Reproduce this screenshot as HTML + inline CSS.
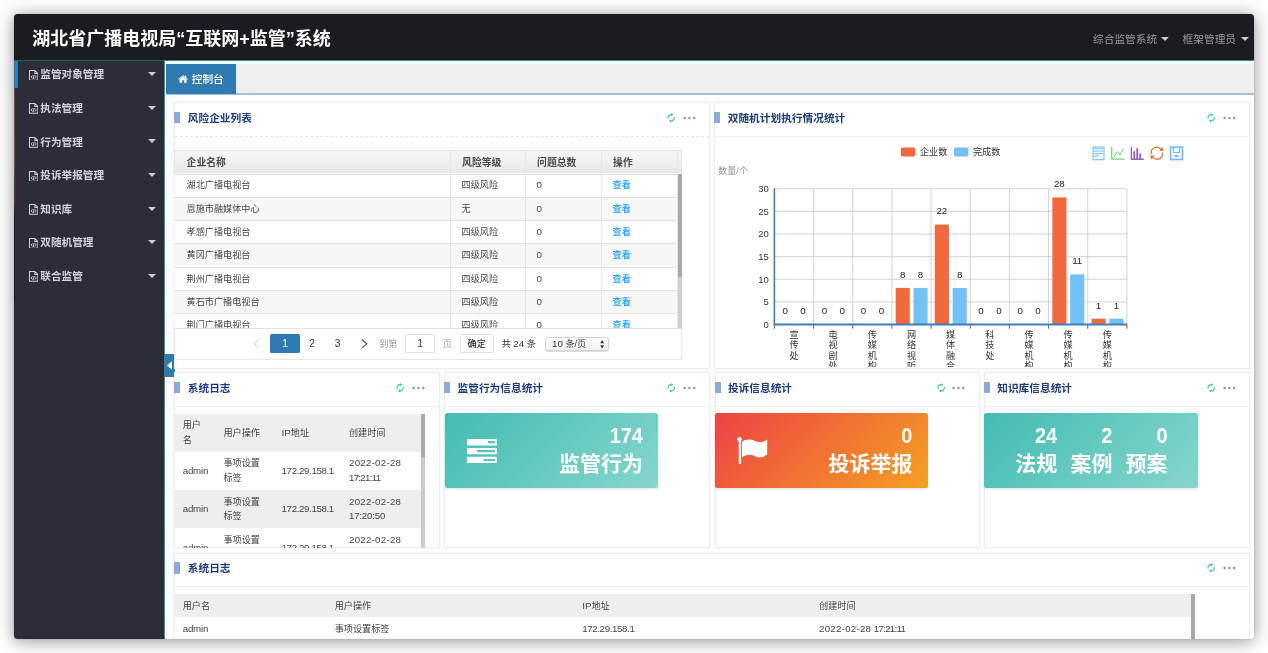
<!DOCTYPE html>
<html lang="zh-CN">
<head>
<meta charset="utf-8">
<title>湖北省广播电视局“互联网+监管”系统</title>
<style>
*{box-sizing:border-box;margin:0;padding:0}
html,body{width:1268px;height:653px;overflow:hidden;background:#fff}
body{font-family:"Liberation Sans","Noto Sans CJK SC",sans-serif;font-size:9.3px;color:#444;position:relative}
#win{position:absolute;left:14px;top:14px;width:1240.4px;height:625.3px;background:#fff;border-radius:3.5px;overflow:hidden;box-shadow:0 1px 18px rgba(0,0,0,.34),0 5px 16px rgba(0,0,0,.10),0 0 2px rgba(0,0,0,.18)}
#pg{position:absolute;left:-14px;top:-14px;width:1268px;height:653px;will-change:transform}
#pg div,#pg span,#pg svg{position:absolute}
#hdr{left:14px;top:14px;width:1241px;height:46.4px;background:#1b1c22}
.ttl{left:32.3px;top:25.6px;font-size:18px;line-height:27px;font-weight:bold;color:#fff;white-space:nowrap}
.nav{top:30.5px;font-size:10.7px;line-height:16px;color:#9a9b9f;white-space:nowrap}
.caret{width:0;height:0;border-left:4.2px solid transparent;border-right:4.2px solid transparent;border-top:4.2px solid #ccc}
#teal{left:14px;top:60.2px;width:1241px;height:1.1px;background:linear-gradient(90deg,#1f625c 0,#1f625c 150px,#2a9182 150px)}
#side{left:14px;top:61.4px;width:150px;height:578px;background:#2b2d39}
#sideline{left:164px;top:61px;width:1.35px;height:578px;background:#2d9c8e}
#act{left:14px;top:61.4px;width:3.8px;height:26.8px;background:#2f7ab0}
.mi{left:40.3px;font-size:10.65px;line-height:16px;color:#d2d3d9;font-weight:bold;white-space:nowrap}
.mico{left:28.9px;width:9.4px;height:10.8px}
#tabbar{left:166.4px;top:63.5px;width:1088px;height:29.8px;background:#efefef}
#tabline{left:166.4px;top:93.3px;width:1088px;height:1.3px;background:#9fc0dc}
#tab{left:166.4px;top:63.7px;width:69.6px;height:30.2px;background:#2f7ab0}
#tab span{left:25.3px;top:6.9px;font-size:10.7px;line-height:16px;white-space:nowrap;color:#fff;font-weight:500}
.panel{background:#fff;border:1px solid #eeeeee;box-shadow:0 0 2.5px rgba(0,0,0,.07)}
.pt{font-size:10.7px;line-height:16px;font-weight:bold;color:#1f3b7b;white-space:nowrap}
.pbar{width:6.1px;height:11.6px;background:#8fa8da}
.pline{height:0;border-top:1px dashed #e6e6e6}
.dot{width:2.8px;height:2.8px;border-radius:50%;background:#a2a2a2}
.t{white-space:nowrap;line-height:14px;font-size:9.15px;color:#444}
.th{font-weight:bold;font-size:9.8px;color:#4a4a4a}
.lk{color:#1e9fff;font-weight:500}
.vl{width:1px;background:#e6e6e6}
.hl{height:1.2px;background:#e1e1e1}
.card{border-radius:2.5px;box-shadow:0 1px 3px rgba(0,0,0,.12)}
.big{font-size:20px;line-height:28px;font-weight:bold;color:#fff;white-space:nowrap;text-align:right;transform:scaleY(1.06);transform-origin:50% 72%}
.bigc{font-size:21px;line-height:28px;font-weight:bold;color:#fff;white-space:nowrap;text-align:right}
#pg span.n{position:static;font-size:9.8px}
svg text{font-family:"Liberation Sans","Noto Sans CJK SC",sans-serif}
</style>
</head>
<body>
<div id="win"><div id="pg">
<div id="hdr"></div>
<div class="ttl">湖北省广播电视局“互联网+监管”系统</div>
<div class="nav" style="left:1093px">综合监管系统</div>
<div class="caret" style="left:1161.4px;top:36.6px"></div>
<div class="nav" style="left:1182.6px">框架管理员</div>
<div class="caret" style="left:1240.7px;top:36.6px"></div>
<div id="teal"></div>
<div id="side"></div><div id="sideline"></div><div id="act"></div>
<div style="left:14px;top:88.2px;width:1px;height:214px;background:linear-gradient(rgba(190,135,55,.45) 0%,rgba(200,130,50,.5) 36%,rgba(200,55,80,.6) 42%,rgba(200,50,80,.55) 53%,#1d1d29 60%,#1d1d29 100%)"></div>
<svg class="mico" style="top:69.7px" viewBox="0 0 9.4 10.8"><path d="M0.5 0.5H5.9L8.9 3.5V10.3H0.5Z M5.9 0.5V3.5H8.9" fill="none" stroke="#d2d3d9" stroke-width="1.05" stroke-linejoin="round"/><path d="M3.5 5.3L2.2 6.9L3.5 8.5M5.9 5.3L7.2 6.9L5.9 8.5M5.1 4.9L4.3 8.9" fill="none" stroke="#d2d3d9" stroke-width="0.95"/></svg>
<div class="mi" style="top:66.3px">监管对象管理</div>
<div class="caret" style="left:147.9px;top:72.2px"></div>
<svg class="mico" style="top:103.3px" viewBox="0 0 9.4 10.8"><path d="M0.5 0.5H5.9L8.9 3.5V10.3H0.5Z M5.9 0.5V3.5H8.9" fill="none" stroke="#d2d3d9" stroke-width="1.05" stroke-linejoin="round"/><path d="M3.5 5.3L2.2 6.9L3.5 8.5M5.9 5.3L7.2 6.9L5.9 8.5M5.1 4.9L4.3 8.9" fill="none" stroke="#d2d3d9" stroke-width="0.95"/></svg>
<div class="mi" style="top:99.9px">执法管理</div>
<div class="caret" style="left:147.9px;top:105.8px"></div>
<svg class="mico" style="top:136.9px" viewBox="0 0 9.4 10.8"><path d="M0.5 0.5H5.9L8.9 3.5V10.3H0.5Z M5.9 0.5V3.5H8.9" fill="none" stroke="#d2d3d9" stroke-width="1.05" stroke-linejoin="round"/><path d="M3.5 5.3L2.2 6.9L3.5 8.5M5.9 5.3L7.2 6.9L5.9 8.5M5.1 4.9L4.3 8.9" fill="none" stroke="#d2d3d9" stroke-width="0.95"/></svg>
<div class="mi" style="top:133.5px">行为管理</div>
<div class="caret" style="left:147.9px;top:139.4px"></div>
<svg class="mico" style="top:170.5px" viewBox="0 0 9.4 10.8"><path d="M0.5 0.5H5.9L8.9 3.5V10.3H0.5Z M5.9 0.5V3.5H8.9" fill="none" stroke="#d2d3d9" stroke-width="1.05" stroke-linejoin="round"/><path d="M3.5 5.3L2.2 6.9L3.5 8.5M5.9 5.3L7.2 6.9L5.9 8.5M5.1 4.9L4.3 8.9" fill="none" stroke="#d2d3d9" stroke-width="0.95"/></svg>
<div class="mi" style="top:167.1px">投诉举报管理</div>
<div class="caret" style="left:147.9px;top:173px"></div>
<svg class="mico" style="top:204.1px" viewBox="0 0 9.4 10.8"><path d="M0.5 0.5H5.9L8.9 3.5V10.3H0.5Z M5.9 0.5V3.5H8.9" fill="none" stroke="#d2d3d9" stroke-width="1.05" stroke-linejoin="round"/><path d="M3.5 5.3L2.2 6.9L3.5 8.5M5.9 5.3L7.2 6.9L5.9 8.5M5.1 4.9L4.3 8.9" fill="none" stroke="#d2d3d9" stroke-width="0.95"/></svg>
<div class="mi" style="top:200.7px">知识库</div>
<div class="caret" style="left:147.9px;top:206.6px"></div>
<svg class="mico" style="top:237.7px" viewBox="0 0 9.4 10.8"><path d="M0.5 0.5H5.9L8.9 3.5V10.3H0.5Z M5.9 0.5V3.5H8.9" fill="none" stroke="#d2d3d9" stroke-width="1.05" stroke-linejoin="round"/><path d="M3.5 5.3L2.2 6.9L3.5 8.5M5.9 5.3L7.2 6.9L5.9 8.5M5.1 4.9L4.3 8.9" fill="none" stroke="#d2d3d9" stroke-width="0.95"/></svg>
<div class="mi" style="top:234.3px">双随机管理</div>
<div class="caret" style="left:147.9px;top:240.2px"></div>
<svg class="mico" style="top:271.3px" viewBox="0 0 9.4 10.8"><path d="M0.5 0.5H5.9L8.9 3.5V10.3H0.5Z M5.9 0.5V3.5H8.9" fill="none" stroke="#d2d3d9" stroke-width="1.05" stroke-linejoin="round"/><path d="M3.5 5.3L2.2 6.9L3.5 8.5M5.9 5.3L7.2 6.9L5.9 8.5M5.1 4.9L4.3 8.9" fill="none" stroke="#d2d3d9" stroke-width="0.95"/></svg>
<div class="mi" style="top:267.9px">联合监管</div>
<div class="caret" style="left:147.9px;top:273.8px"></div>
<div id="tabbar"></div><div id="tabline"></div>
<div id="tab"><svg style="left:11.6px;top:11.4px;width:10.2px;height:8px" viewBox="0 0 9.6 7.6"><path d="M4.8 1.5L1.4 4.3V7.3H3.9V5.1H5.7V7.3H8.2V4.3Z" fill="#fff"/><path d="M0.3 3.9L4.8 0.2L6.6 1.7V0.7H7.8V2.7L9.3 3.9L8.8 4.5L4.8 1.2L0.8 4.5Z" fill="#fff"/></svg><span>控制台</span></div>
<div style="left:164.1px;top:354.2px;width:10.8px;height:22.5px;background:#2f7ab0"><svg style="left:2.7px;top:6.6px;width:5.4px;height:9.2px" viewBox="0 0 5.4 9.2"><path d="M5.4 0V9.2L0 4.6Z" fill="#fff"/></svg></div>
<div class="panel" style="left:174.4px;top:102.2px;width:535.6px;height:266.5px;"></div>
<div class="pbar" style="left:174.4px;top:111.7px;width:6.1px;height:11.6px;"></div>
<div class="pt" style="left:187.8px;top:109.6px;">风险企业列表</div>
<div class="pline" style="left:175.4px;top:135.6px;width:533.6px"></div>
<svg style="left:666.8px;top:112.7px;width:8.4px;height:9.6px" viewBox="0 0 8.4 9.6"><g fill="none" stroke="#34c98a" stroke-width="1.1"><path d="M1.1 5.6A3.2 3.2 0 0 1 4.6 1.7"/><path d="M7.3 4A3.2 3.2 0 0 1 3.8 7.9"/></g><path d="M4.2 0L6.3 1.7L4.2 3.3Z M4.2 9.6L2.1 7.9L4.2 6.3Z" fill="#34c98a"/></svg>
<svg style="left:682.5px;top:115.5px;width:13px;height:4px" viewBox="0 0 13 4"><circle cx="1.7" cy="2" r="1.35" fill="#9c9c9c"/><circle cx="6.45" cy="2" r="1.35" fill="#9c9c9c"/><circle cx="11.2" cy="2" r="1.35" fill="#9c9c9c"/></svg>
<div style="left:174.4px;top:149.9px;width:507.9px;height:210.5px;border:1px solid #e6e6e6;background:#fff"></div>
<div style="left:175.4px;top:150.9px;width:505.9px;height:22.6px;background:linear-gradient(#f6f6f6,#e9e9e9)"></div>
<div style="left:174.4px;top:174px;width:504px;height:154px;overflow:hidden"><div style="left:0px;top:0px;width:503px;height:23.3px;background:#fff"></div><div style="left:0px;top:23.3px;width:503px;height:23.3px;background:#f7f7f7"></div><div style="left:0px;top:46.6px;width:503px;height:23.3px;background:#fff"></div><div style="left:0px;top:69.9px;width:503px;height:23.3px;background:#f7f7f7"></div><div style="left:0px;top:93.2px;width:503px;height:23.3px;background:#fff"></div><div style="left:0px;top:116.5px;width:503px;height:23.3px;background:#f7f7f7"></div><div style="left:0px;top:139.8px;width:503px;height:23.3px;background:#fff"></div><div class="hl" style="left:0px;top:22.7px;width:503px;height:1px;"></div><div class="t" style="left:12.2px;top:4.35px;">湖北广播电视台</div><div class="t" style="left:287.2px;top:4.35px;">四级风险</div><div class="t" style="left:362.2px;top:4.35px;font-size:9.8px">0</div><div class="t lk" style="left:438.2px;top:4.35px;">查看</div><div class="hl" style="left:0px;top:46px;width:503px;height:1px;"></div><div class="t" style="left:12.2px;top:27.65px;">恩施市融媒体中心</div><div class="t" style="left:287.2px;top:27.65px;">无</div><div class="t" style="left:362.2px;top:27.65px;font-size:9.8px">0</div><div class="t lk" style="left:438.2px;top:27.65px;">查看</div><div class="hl" style="left:0px;top:69.3px;width:503px;height:1px;"></div><div class="t" style="left:12.2px;top:50.95px;">孝感广播电视台</div><div class="t" style="left:287.2px;top:50.95px;">四级风险</div><div class="t" style="left:362.2px;top:50.95px;font-size:9.8px">0</div><div class="t lk" style="left:438.2px;top:50.95px;">查看</div><div class="hl" style="left:0px;top:92.6px;width:503px;height:1px;"></div><div class="t" style="left:12.2px;top:74.25px;">黄冈广播电视台</div><div class="t" style="left:287.2px;top:74.25px;">四级风险</div><div class="t" style="left:362.2px;top:74.25px;font-size:9.8px">0</div><div class="t lk" style="left:438.2px;top:74.25px;">查看</div><div class="hl" style="left:0px;top:115.9px;width:503px;height:1px;"></div><div class="t" style="left:12.2px;top:97.55px;">荆州广播电视台</div><div class="t" style="left:287.2px;top:97.55px;">四级风险</div><div class="t" style="left:362.2px;top:97.55px;font-size:9.8px">0</div><div class="t lk" style="left:438.2px;top:97.55px;">查看</div><div class="hl" style="left:0px;top:139.2px;width:503px;height:1px;"></div><div class="t" style="left:12.2px;top:120.85px;">黄石市广播电视台</div><div class="t" style="left:287.2px;top:120.85px;">四级风险</div><div class="t" style="left:362.2px;top:120.85px;font-size:9.8px">0</div><div class="t lk" style="left:438.2px;top:120.85px;">查看</div><div class="hl" style="left:0px;top:162.5px;width:503px;height:1px;"></div><div class="t" style="left:12.2px;top:144.15px;">荆门广播电视台</div><div class="t" style="left:287.2px;top:144.15px;">四级风险</div><div class="t" style="left:362.2px;top:144.15px;font-size:9.8px">0</div><div class="t lk" style="left:438.2px;top:144.15px;">查看</div></div>
<div class="hl" style="left:174.4px;top:173.5px;width:507.9px;height:1px;"></div>
<div class="t th" style="left:186.6px;top:155.6px;">企业名称</div>
<div class="t th" style="left:462.1px;top:155.6px;">风险等级</div>
<div class="t th" style="left:537.1px;top:155.6px;">问题总数</div>
<div class="t th" style="left:613.1px;top:155.6px;">操作</div>
<div class="vl" style="left:450px;top:149.9px;width:1px;height:178.1px;"></div>
<div class="vl" style="left:525px;top:149.9px;width:1px;height:178.1px;"></div>
<div class="vl" style="left:601px;top:149.9px;width:1px;height:178.1px;"></div>
<div class="vl" style="left:677.2px;top:149.9px;width:1px;height:178.1px;"></div>
<div style="left:677.7px;top:174.1px;width:4.5px;height:153.9px;background:#cfcfcf"></div>
<div style="left:677.7px;top:174.1px;width:4.5px;height:102.6px;background:#a9a9a9"></div>
<div class="hl" style="left:174.4px;top:327.6px;width:507.9px;height:1px;"></div>
<svg style="left:253px;top:339.4px;width:6.4px;height:9.4px" viewBox="0 0 6.4 9.4"><path d="M5.6 0.5L1 4.7L5.6 8.9" fill="none" stroke="#cfcfcf" stroke-width="1"/></svg>
<div style="left:270.3px;top:334.2px;width:29.6px;height:18.9px;background:#2f7ab0;border-radius:1.5px"></div>
<div class="t" style="left:270.3px;top:336.8px;width:29.6px;text-align:center;color:#fff;font-size:10.3px">1</div>
<div class="t" style="left:302.2px;top:336.8px;width:20px;text-align:center;color:#333;font-size:10.3px">2</div>
<div class="t" style="left:327.5px;top:336.8px;width:20px;text-align:center;color:#333;font-size:10.3px">3</div>
<svg style="left:361.4px;top:339.2px;width:6.8px;height:9.6px" viewBox="0 0 6.8 9.6"><path d="M0.8 0.5L5.8 4.8L0.8 9.1" fill="none" stroke="#444" stroke-width="1.05"/></svg>
<div class="t" style="left:379.2px;top:336.8px;color:#999">到第</div>
<div style="left:405.3px;top:334.2px;width:29.6px;height:18.9px;border:1px solid #e2e2e2;border-radius:1.5px;background:#fff"></div>
<div class="t" style="left:405.3px;top:336.8px;width:29.6px;text-align:center;color:#333;font-size:10.3px">1</div>
<div class="t" style="left:442.8px;top:336.8px;color:#999">页</div>
<div style="left:459.8px;top:334.2px;width:33.9px;height:18.9px;border:1px solid #e2e2e2;border-radius:1.5px;background:#fff"></div>
<div class="t" style="left:459.8px;top:336.8px;width:33.9px;text-align:center;color:#333;font-weight:500">确定</div>
<div class="t" style="left:501.7px;top:336.8px;color:#333">共 <span class="n">24</span> 条</div>
<div style="left:544.9px;top:336.6px;width:63.8px;height:14.3px;border:1px solid #d4d4d4;border-radius:3px;background:linear-gradient(#fdfdfd,#f0f0f0);box-shadow:0 0.5px 1px rgba(0,0,0,.15)"></div>
<div class="t" style="left:552px;top:336.8px;color:#333"><span class="n">10</span> 条/页</div>
<svg style="left:599.6px;top:339.6px;width:4.4px;height:8.4px" viewBox="0 0 4.4 8.4"><path d="M2.2 0L4.2 3.2H0.2Z M2.2 8.4L4.2 5.2H0.2Z" fill="#333"/></svg>
<div class="panel" style="left:714.3px;top:102.2px;width:535.7px;height:266.5px;"></div>
<div class="pbar" style="left:714.3px;top:111.7px;width:6.1px;height:11.6px;"></div>
<div class="pt" style="left:727.7px;top:109.6px;">双随机计划执行情况统计</div>
<div class="pline" style="left:715.3px;top:135.6px;width:533.7px;border-top:1px solid #efefef"></div>
<svg style="left:1206.8px;top:112.7px;width:8.4px;height:9.6px" viewBox="0 0 8.4 9.6"><g fill="none" stroke="#34c98a" stroke-width="1.1"><path d="M1.1 5.6A3.2 3.2 0 0 1 4.6 1.7"/><path d="M7.3 4A3.2 3.2 0 0 1 3.8 7.9"/></g><path d="M4.2 0L6.3 1.7L4.2 3.3Z M4.2 9.6L2.1 7.9L4.2 6.3Z" fill="#34c98a"/></svg>
<svg style="left:1222.5px;top:115.5px;width:13px;height:4px" viewBox="0 0 13 4"><circle cx="1.7" cy="2" r="1.35" fill="#9c9c9c"/><circle cx="6.45" cy="2" r="1.35" fill="#9c9c9c"/><circle cx="11.2" cy="2" r="1.35" fill="#9c9c9c"/></svg>
<svg style="left:715.5px;top:136.5px;width:533.5px;height:230.6px;overflow:hidden" viewBox="715.5 136.5 533.5 230.6"><path d="M773.9 188.3H1126.43M773.9 210.92H1126.43M773.9 233.53H1126.43M773.9 256.15H1126.43M773.9 278.77H1126.43M773.9 301.38H1126.43M813.07 188.3V324M852.24 188.3V324M891.41 188.3V324M930.58 188.3V324M969.75 188.3V324M1008.92 188.3V324M1048.09 188.3V324M1087.26 188.3V324M1126.43 188.3V324" stroke="#c9c9c9" stroke-width="0.8" fill="none"/><path d="M773.9 324.6V328.2M813.07 324.6V328.2M852.24 324.6V328.2M891.41 324.6V328.2M930.58 324.6V328.2M969.75 324.6V328.2M1008.92 324.6V328.2M1048.09 324.6V328.2M1087.26 324.6V328.2M1126.43 324.6V328.2" stroke="#333" stroke-width="0.8" fill="none"/><text x="784.7" y="313.3" font-size="9.8" fill="#222" text-anchor="middle">0</text><text x="802.55" y="313.3" font-size="9.8" fill="#222" text-anchor="middle">0</text><text x="823.87" y="313.3" font-size="9.8" fill="#222" text-anchor="middle">0</text><text x="841.72" y="313.3" font-size="9.8" fill="#222" text-anchor="middle">0</text><text x="863.04" y="313.3" font-size="9.8" fill="#222" text-anchor="middle">0</text><text x="880.89" y="313.3" font-size="9.8" fill="#222" text-anchor="middle">0</text><rect x="895.16" y="287.41" width="14.1" height="36.59" fill="#f0693f"/><text x="902.21" y="277.11" font-size="9.8" fill="#222" text-anchor="middle">8</text><rect x="913.01" y="287.41" width="14.1" height="36.59" fill="#74c1f8"/><text x="920.06" y="277.11" font-size="9.8" fill="#222" text-anchor="middle">8</text><rect x="934.33" y="224.09" width="14.1" height="99.91" fill="#f0693f"/><text x="941.38" y="213.79" font-size="9.8" fill="#222" text-anchor="middle">22</text><rect x="952.18" y="287.41" width="14.1" height="36.59" fill="#74c1f8"/><text x="959.23" y="277.11" font-size="9.8" fill="#222" text-anchor="middle">8</text><text x="980.55" y="313.3" font-size="9.8" fill="#222" text-anchor="middle">0</text><text x="998.4" y="313.3" font-size="9.8" fill="#222" text-anchor="middle">0</text><text x="1019.72" y="313.3" font-size="9.8" fill="#222" text-anchor="middle">0</text><text x="1037.57" y="313.3" font-size="9.8" fill="#222" text-anchor="middle">0</text><rect x="1051.84" y="196.95" width="14.1" height="127.05" fill="#f0693f"/><text x="1058.89" y="186.65" font-size="9.8" fill="#222" text-anchor="middle">28</text><rect x="1069.69" y="273.84" width="14.1" height="50.16" fill="#74c1f8"/><text x="1076.74" y="263.54" font-size="9.8" fill="#222" text-anchor="middle">11</text><rect x="1091.01" y="318.18" width="14.1" height="5.82" fill="#f0693f"/><text x="1098.06" y="308.28" font-size="9.8" fill="#222" text-anchor="middle">1</text><rect x="1108.86" y="318.18" width="14.1" height="5.82" fill="#74c1f8"/><text x="1115.91" y="308.28" font-size="9.8" fill="#222" text-anchor="middle">1</text><path d="M773.9 187.9V324.9" stroke="#3f7ebc" stroke-width="1.6" fill="none"/><path d="M773.15 324H1126.83" stroke="#3f7ebc" stroke-width="1.8" fill="none"/><text x="768.4" y="191.6" font-size="9.5" fill="#333" text-anchor="end">30</text><text x="768.4" y="214.22" font-size="9.5" fill="#333" text-anchor="end">25</text><text x="768.4" y="236.83" font-size="9.5" fill="#333" text-anchor="end">20</text><text x="768.4" y="259.45" font-size="9.5" fill="#333" text-anchor="end">15</text><text x="768.4" y="282.07" font-size="9.5" fill="#333" text-anchor="end">10</text><text x="768.4" y="304.68" font-size="9.5" fill="#333" text-anchor="end">5</text><text x="768.4" y="327.3" font-size="9.5" fill="#333" text-anchor="end">0</text><text x="717.6" y="173.5" font-size="9.15" fill="#999">数量/个</text><text x="793.49" y="337.5" font-size="9.15" fill="#333" text-anchor="middle">宣</text><text x="793.49" y="348" font-size="9.15" fill="#333" text-anchor="middle">传</text><text x="793.49" y="358.5" font-size="9.15" fill="#333" text-anchor="middle">处</text><text x="832.65" y="337.5" font-size="9.15" fill="#333" text-anchor="middle">电</text><text x="832.65" y="348" font-size="9.15" fill="#333" text-anchor="middle">视</text><text x="832.65" y="358.5" font-size="9.15" fill="#333" text-anchor="middle">剧</text><text x="832.65" y="369" font-size="9.15" fill="#333" text-anchor="middle">处</text><text x="871.83" y="337.5" font-size="9.15" fill="#333" text-anchor="middle">传</text><text x="871.83" y="348" font-size="9.15" fill="#333" text-anchor="middle">媒</text><text x="871.83" y="358.5" font-size="9.15" fill="#333" text-anchor="middle">机</text><text x="871.83" y="369" font-size="9.15" fill="#333" text-anchor="middle">构</text><text x="911" y="337.5" font-size="9.15" fill="#333" text-anchor="middle">网</text><text x="911" y="348" font-size="9.15" fill="#333" text-anchor="middle">络</text><text x="911" y="358.5" font-size="9.15" fill="#333" text-anchor="middle">视</text><text x="911" y="369" font-size="9.15" fill="#333" text-anchor="middle">听</text><text x="911" y="379.5" font-size="9.15" fill="#333" text-anchor="middle">节</text><text x="950.16" y="337.5" font-size="9.15" fill="#333" text-anchor="middle">媒</text><text x="950.16" y="348" font-size="9.15" fill="#333" text-anchor="middle">体</text><text x="950.16" y="358.5" font-size="9.15" fill="#333" text-anchor="middle">融</text><text x="950.16" y="369" font-size="9.15" fill="#333" text-anchor="middle">合</text><text x="950.16" y="379.5" font-size="9.15" fill="#333" text-anchor="middle">发</text><text x="989.34" y="337.5" font-size="9.15" fill="#333" text-anchor="middle">科</text><text x="989.34" y="348" font-size="9.15" fill="#333" text-anchor="middle">技</text><text x="989.34" y="358.5" font-size="9.15" fill="#333" text-anchor="middle">处</text><text x="1028.5" y="337.5" font-size="9.15" fill="#333" text-anchor="middle">传</text><text x="1028.5" y="348" font-size="9.15" fill="#333" text-anchor="middle">媒</text><text x="1028.5" y="358.5" font-size="9.15" fill="#333" text-anchor="middle">机</text><text x="1028.5" y="369" font-size="9.15" fill="#333" text-anchor="middle">构</text><text x="1067.67" y="337.5" font-size="9.15" fill="#333" text-anchor="middle">传</text><text x="1067.67" y="348" font-size="9.15" fill="#333" text-anchor="middle">媒</text><text x="1067.67" y="358.5" font-size="9.15" fill="#333" text-anchor="middle">机</text><text x="1067.67" y="369" font-size="9.15" fill="#333" text-anchor="middle">构</text><text x="1106.85" y="337.5" font-size="9.15" fill="#333" text-anchor="middle">传</text><text x="1106.85" y="348" font-size="9.15" fill="#333" text-anchor="middle">媒</text><text x="1106.85" y="358.5" font-size="9.15" fill="#333" text-anchor="middle">机</text><text x="1106.85" y="369" font-size="9.15" fill="#333" text-anchor="middle">构</text><rect x="900.4" y="146.9" width="14.6" height="9.1" rx="2" fill="#f0693f"/><text x="919.4" y="154.9" font-size="9.15" fill="#333">企业数</text><rect x="953.4" y="146.9" width="14.6" height="9.1" rx="2" fill="#74c1f8"/><text x="972.4" y="154.9" font-size="9.15" fill="#333">完成数</text><g fill="none" stroke-width="0.85"><g stroke="#1e90ff" opacity=".62"><rect x="1092.6" y="146.5" width="10.9" height="12.7" stroke-width="1.1"/><path d="M1093.6 148.2H1102.6M1093.6 150.6H1102.6M1093.6 153H1102.6M1093.6 155.5H1098.4" stroke-width="1"/></g><g stroke="#22bb22" opacity=".8"><path d="M1111.3 146.3V158.6H1124" stroke-width="1"/><path d="M1113.1 156.9L1116.9 151.2L1119.4 154.6L1123.1 147.9"/></g><g stroke="#4b0082" opacity=".6"><path d="M1130.9 146.3V158.7H1143.4" stroke-width="1.4"/><path d="M1133.75 158.7V150.8M1136.75 158.7V147.8M1139.75 158.7V152.9" stroke-width="1.9"/></g><g stroke="#d2691e" stroke-width="1.2" opacity=".9"><path d="M1150.9 153.6A5.5 5.5 0 0 1 1160.6 148.9"/><path d="M1161.9 151.8A5.5 5.5 0 0 1 1152.2 156.5"/><path d="M1158.9 150.7L1163.4 150.1L1161.6 146.2Z M1153.9 154.7L1149.4 155.3L1151.2 159.2Z" fill="#d2691e" stroke="none"/></g><g stroke="#1e90ff" opacity=".62"><rect x="1170.1" y="146.7" width="11.9" height="12.3" stroke-width="1.7"/><path d="M1172.9 146.7V152H1179.2V146.7" stroke-width="1.1"/><rect x="1174.1" y="154.5" width="4" height="2.1" fill="#1e90ff" stroke="none"/></g></g></svg>
<div class="panel" style="left:174.4px;top:372.4px;width:265.2px;height:175.5px;"></div>
<div class="pbar" style="left:174.4px;top:381.9px;width:6.1px;height:11.6px;"></div>
<div class="pt" style="left:187.8px;top:379.8px;">系统日志</div>
<div class="pline" style="left:175.4px;top:405.7px;width:263.2px;border-top:1px solid #efefef"></div>
<svg style="left:396.4px;top:382.9px;width:8.4px;height:9.6px" viewBox="0 0 8.4 9.6"><g fill="none" stroke="#34c98a" stroke-width="1.1"><path d="M1.1 5.6A3.2 3.2 0 0 1 4.6 1.7"/><path d="M7.3 4A3.2 3.2 0 0 1 3.8 7.9"/></g><path d="M4.2 0L6.3 1.7L4.2 3.3Z M4.2 9.6L2.1 7.9L4.2 6.3Z" fill="#34c98a"/></svg>
<svg style="left:412.1px;top:385.7px;width:13px;height:4px" viewBox="0 0 13 4"><circle cx="1.7" cy="2" r="1.35" fill="#9c9c9c"/><circle cx="6.45" cy="2" r="1.35" fill="#9c9c9c"/><circle cx="11.2" cy="2" r="1.35" fill="#9c9c9c"/></svg>
<div style="left:175.4px;top:413.5px;width:250px;height:134px;overflow:hidden"><div style="left:0px;top:0px;width:245.8px;height:38.3px;background:#eeeeee"></div><div style="left:0px;top:76.6px;width:245.8px;height:38.4px;background:#eeeeee"></div><div style="left:245.7px;top:0px;width:4.3px;height:134px;background:#cbcbcb"></div><div style="left:245.7px;top:0px;width:4.3px;height:43.2px;background:#a9a9a9"></div><div class="t" style="left:7.3px;top:4.8px;">用户</div><div class="t" style="left:7.3px;top:19.4px;">名</div><div class="t" style="left:48px;top:12.2px;">用户操作</div><div class="t" style="left:106.2px;top:12.2px;"><span class="n">IP</span>地址</div><div class="t" style="left:173.6px;top:12.2px;">创建时间</div><div class="t" style="left:7.3px;top:50.2px;font-size:9.7px;letter-spacing:-0.18px">admin</div><div class="t" style="left:48px;top:42.9px;">事项设置</div><div class="t" style="left:48px;top:57.5px;">标签</div><div class="t" style="left:106.2px;top:50.2px;font-size:9.7px;letter-spacing:-0.36px">172.29.158.1</div><div class="t" style="left:173.6px;top:42.9px;font-size:9.7px;letter-spacing:0.27px">2022-02-28</div><div class="t" style="left:173.6px;top:57.5px;font-size:9.7px;letter-spacing:-0.7px">17:21:11</div><div class="t" style="left:7.3px;top:88.6px;font-size:9.7px;letter-spacing:-0.18px">admin</div><div class="t" style="left:48px;top:81.3px;">事项设置</div><div class="t" style="left:48px;top:95.9px;">标签</div><div class="t" style="left:106.2px;top:88.6px;font-size:9.7px;letter-spacing:-0.36px">172.29.158.1</div><div class="t" style="left:173.6px;top:81.3px;font-size:9.7px;letter-spacing:0.27px">2022-02-28</div><div class="t" style="left:173.6px;top:95.9px;font-size:9.7px;letter-spacing:-0.2px">17:20:50</div><div class="t" style="left:7.3px;top:127px;font-size:9.7px;letter-spacing:-0.18px">admin</div><div class="t" style="left:48px;top:119.7px;">事项设置</div><div class="t" style="left:48px;top:134.3px;">标签</div><div class="t" style="left:106.2px;top:127px;font-size:9.7px;letter-spacing:-0.36px">172.29.158.1</div><div class="t" style="left:173.6px;top:119.7px;font-size:9.7px;letter-spacing:0.27px">2022-02-28</div><div class="t" style="left:173.6px;top:134.3px;font-size:9.7px;letter-spacing:-0.2px">17:20:31</div></div>
<div class="panel" style="left:444.1px;top:372.4px;width:265.9px;height:175.5px;"></div>
<div class="pbar" style="left:444.1px;top:381.9px;width:6.1px;height:11.6px;"></div>
<div class="pt" style="left:457.5px;top:379.8px;">监管行为信息统计</div>
<div class="pline" style="left:445.1px;top:405.7px;width:263.9px;border-top:1px solid #efefef"></div>
<svg style="left:666.8px;top:382.9px;width:8.4px;height:9.6px" viewBox="0 0 8.4 9.6"><g fill="none" stroke="#34c98a" stroke-width="1.1"><path d="M1.1 5.6A3.2 3.2 0 0 1 4.6 1.7"/><path d="M7.3 4A3.2 3.2 0 0 1 3.8 7.9"/></g><path d="M4.2 0L6.3 1.7L4.2 3.3Z M4.2 9.6L2.1 7.9L4.2 6.3Z" fill="#34c98a"/></svg>
<svg style="left:682.5px;top:385.7px;width:13px;height:4px" viewBox="0 0 13 4"><circle cx="1.7" cy="2" r="1.35" fill="#9c9c9c"/><circle cx="6.45" cy="2" r="1.35" fill="#9c9c9c"/><circle cx="11.2" cy="2" r="1.35" fill="#9c9c9c"/></svg>
<div class="card" style="left:444.9px;top:413.4px;width:212.9px;height:74.8px;background:linear-gradient(135deg,#43bcb2,#86d6cd)"></div>
<svg style="left:467.2px;top:438.9px;width:30px;height:24.3px" viewBox="0 0 30 24.3"><path fill="#fff" fill-rule="evenodd" d="M1 0H29a1 1 0 0 1 1 1V5.4a1 1 0 0 1 -1 1H1a1 1 0 0 1 -1 -1V1a1 1 0 0 1 1 -1ZM21 2.1V4.3H28V2.1Z M1 8.9H29a1 1 0 0 1 1 1V14.3a1 1 0 0 1 -1 1H1a1 1 0 0 1 -1 -1V9.9a1 1 0 0 1 1 -1ZM10.2 11V13.2H28V11Z M1 17.8H29a1 1 0 0 1 1 1V23.2a1 1 0 0 1 -1 1H1a1 1 0 0 1 -1 -1V18.8a1 1 0 0 1 1 -1ZM16.6 19.9V22.1H28V19.9Z"/></svg>
<div class="big" style="left:543px;top:422.2px;width:100px">174</div>
<div class="bigc" style="left:523px;top:449.9px;width:120px">监管行为</div>
<div class="panel" style="left:714.5px;top:372.4px;width:265.2px;height:175.5px;"></div>
<div class="pbar" style="left:714.5px;top:381.9px;width:6.1px;height:11.6px;"></div>
<div class="pt" style="left:727.9px;top:379.8px;">投诉信息统计</div>
<div class="pline" style="left:715.5px;top:405.7px;width:263.2px;border-top:1px solid #efefef"></div>
<svg style="left:936.5px;top:382.9px;width:8.4px;height:9.6px" viewBox="0 0 8.4 9.6"><g fill="none" stroke="#34c98a" stroke-width="1.1"><path d="M1.1 5.6A3.2 3.2 0 0 1 4.6 1.7"/><path d="M7.3 4A3.2 3.2 0 0 1 3.8 7.9"/></g><path d="M4.2 0L6.3 1.7L4.2 3.3Z M4.2 9.6L2.1 7.9L4.2 6.3Z" fill="#34c98a"/></svg>
<svg style="left:952.2px;top:385.7px;width:13px;height:4px" viewBox="0 0 13 4"><circle cx="1.7" cy="2" r="1.35" fill="#9c9c9c"/><circle cx="6.45" cy="2" r="1.35" fill="#9c9c9c"/><circle cx="11.2" cy="2" r="1.35" fill="#9c9c9c"/></svg>
<div class="card" style="left:714.8px;top:413.4px;width:213px;height:74.8px;background:linear-gradient(135deg,#ee4245,#f4a022)"></div>
<svg style="left:736px;top:436px;width:33px;height:30px" viewBox="736 436 33 30"><circle cx="739.5" cy="439.3" r="2.2" fill="#fff"/><rect x="738.8" y="439.3" width="2.3" height="24.7" rx="0.8" fill="#fff"/><path fill="#fff" d="M742 441.6C746 439.2 750 438.9 755 441.1C760 443.3 763 442.2 767.2 439.4V454.4C763 457.3 760 458.4 755 456.2C750 454 746 454.5 742 457.6Z"/></svg>
<div class="big" style="left:812.4px;top:422.2px;width:100px">0</div>
<div class="bigc" style="left:792.6px;top:449.9px;width:120px">投诉举报</div>
<div class="panel" style="left:983.8px;top:372.4px;width:266.2px;height:175.5px;"></div>
<div class="pbar" style="left:983.8px;top:381.9px;width:6.1px;height:11.6px;"></div>
<div class="pt" style="left:997.2px;top:379.8px;">知识库信息统计</div>
<div class="pline" style="left:984.8px;top:405.7px;width:264.2px;border-top:1px solid #efefef"></div>
<svg style="left:1206.8px;top:382.9px;width:8.4px;height:9.6px" viewBox="0 0 8.4 9.6"><g fill="none" stroke="#34c98a" stroke-width="1.1"><path d="M1.1 5.6A3.2 3.2 0 0 1 4.6 1.7"/><path d="M7.3 4A3.2 3.2 0 0 1 3.8 7.9"/></g><path d="M4.2 0L6.3 1.7L4.2 3.3Z M4.2 9.6L2.1 7.9L4.2 6.3Z" fill="#34c98a"/></svg>
<svg style="left:1222.5px;top:385.7px;width:13px;height:4px" viewBox="0 0 13 4"><circle cx="1.7" cy="2" r="1.35" fill="#9c9c9c"/><circle cx="6.45" cy="2" r="1.35" fill="#9c9c9c"/><circle cx="11.2" cy="2" r="1.35" fill="#9c9c9c"/></svg>
<div class="card" style="left:984.3px;top:413.4px;width:213.3px;height:74.8px;background:linear-gradient(135deg,#43bcb2,#86d6cd)"></div>
<div class="big" style="left:997.2px;top:422.2px;width:60px">24</div>
<div class="bigc" style="left:997.2px;top:449.9px;width:60px">法规</div>
<div class="big" style="left:1052.4px;top:422.2px;width:60px">2</div>
<div class="bigc" style="left:1052.4px;top:449.9px;width:60px">案例</div>
<div class="big" style="left:1107.6px;top:422.2px;width:60px">0</div>
<div class="bigc" style="left:1107.6px;top:449.9px;width:60px">预案</div>
<div class="panel" style="left:174.4px;top:552.7px;width:1075.6px;height:120px;"></div>
<div class="pbar" style="left:174.4px;top:562.2px;width:6.1px;height:11.6px;"></div>
<div class="pt" style="left:187.8px;top:560.1px;">系统日志</div>
<div class="pline" style="left:175.4px;top:586.2px;width:1073.6px;border-top:1px solid #efefef"></div>
<svg style="left:1206.8px;top:563.2px;width:8.4px;height:9.6px" viewBox="0 0 8.4 9.6"><g fill="none" stroke="#34c98a" stroke-width="1.1"><path d="M1.1 5.6A3.2 3.2 0 0 1 4.6 1.7"/><path d="M7.3 4A3.2 3.2 0 0 1 3.8 7.9"/></g><path d="M4.2 0L6.3 1.7L4.2 3.3Z M4.2 9.6L2.1 7.9L4.2 6.3Z" fill="#34c98a"/></svg>
<svg style="left:1222.5px;top:566px;width:13px;height:4px" viewBox="0 0 13 4"><circle cx="1.7" cy="2" r="1.35" fill="#9c9c9c"/><circle cx="6.45" cy="2" r="1.35" fill="#9c9c9c"/><circle cx="11.2" cy="2" r="1.35" fill="#9c9c9c"/></svg>
<div style="left:175.4px;top:594.3px;width:1015.7px;height:23.2px;background:#eeeeee"></div>
<div style="left:1191.1px;top:594.3px;width:4.2px;height:60px;background:#a9a9a9"></div>
<div class="t" style="left:182.7px;top:599px;">用户名</div>
<div class="t" style="left:182.7px;top:621.6px;"><span class="n" style="font-size:9.7px;letter-spacing:-0.18px">admin</span></div>
<div class="t" style="left:334.7px;top:599px;">用户操作</div>
<div class="t" style="left:334.7px;top:621.6px;">事项设置标签</div>
<div class="t" style="left:582.2px;top:599px;"><span class="n">IP</span>地址</div>
<div class="t" style="left:582.2px;top:621.6px;"><span class="n" style="font-size:9.7px;letter-spacing:-0.36px">172.29.158.1</span></div>
<div class="t" style="left:819px;top:599px;">创建时间</div>
<div class="t" style="left:819px;top:621.6px;"><span class="n" style="font-size:9.7px;letter-spacing:0.27px">2022-02-28</span> <span class="n" style="font-size:9.7px;letter-spacing:-0.7px">17:21:11</span></div>
</div></div>
</body>
</html>
